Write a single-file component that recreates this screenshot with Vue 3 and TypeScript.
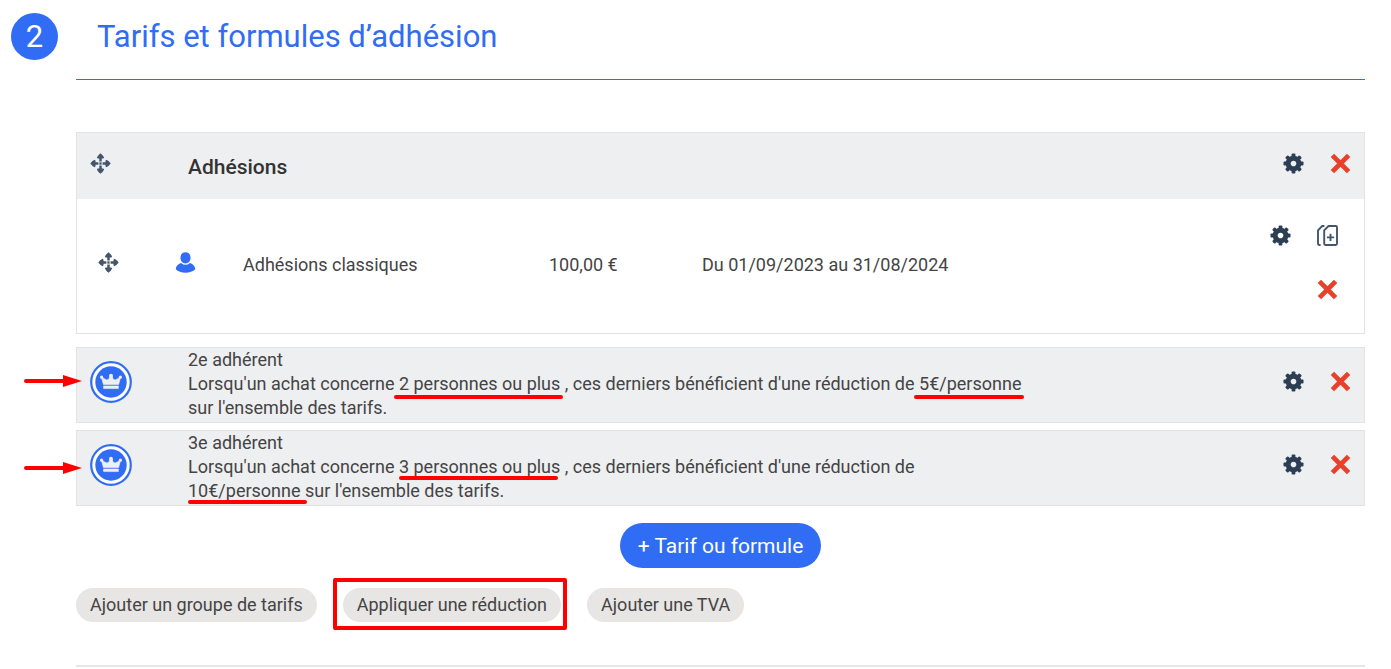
<script setup lang="ts">
interface Reduction {
  id: number
  title: string
  threshold: string
  amount: string
}

const reductions: Reduction[] = [
  { id: 2, title: '2e adhérent', threshold: '2 personnes ou plus', amount: '5€/personne' },
  { id: 3, title: '3e adhérent', threshold: '3 personnes ou plus', amount: '10€/personne' },
]
</script>

<template>
  <svg class="sprite" aria-hidden="true">
    <symbol id="i-move" viewBox="0 0 22 22">
      <path d="M11 0.300Q13.500 2 14.800 4.800L14 5.800H12.300V8.800H9.700V5.800H8L7.200 4.800Q8.500 2 11 0.300ZM11 21.700Q8.500 20 7.200 17.200L8 16.200H9.700V13.200H12.300V16.200H14L14.800 17.200Q13.500 20 11 21.700ZM0.300 11Q2 8.500 4.800 7.200L5.800 8V9.700H8.800V12.300H5.800V14L4.800 14.800Q2 13.500 0.300 11ZM21.700 11Q20 13.500 17.200 14.800L16.200 14V12.300H13.200V9.700H16.200V8L17.200 7.200Q20 8.500 21.700 11Z" fill="#44566c" />
      <rect x="9.800" y="9.800" width="2.400" height="2.400" fill="#44566c" />
    </symbol>
    <symbol id="i-gear" viewBox="-11 -11 22 22">
      <g fill="#2b3e54">
        <rect v-for="n in 8" :key="n" x="-2" y="-10.500" width="4" height="5" rx="1" :transform="`rotate(${n * 45})`" />
      </g>
      <circle r="5.600" fill="none" stroke="#2b3e54" stroke-width="5.200" />
    </symbol>
    <symbol id="i-cross" viewBox="0 0 21 21">
      <path d="M2.400 2.400 18.600 18.600M18.600 2.400 2.400 18.600" stroke="#e8402a" stroke-width="4.800" />
    </symbol>
    <symbol id="i-copy" viewBox="0 0 21 21">
      <g fill="none" stroke="#44566c" stroke-width="1.900">
        <path d="M11.500 1H18.800Q20 1 20 2.200V18.800Q20 20 18.800 20H8.400Q7.200 20 7.200 18.800V5.400Z" />
        <path d="M7.400 1H5.200L1 5.400V18.400Q1 20 3.600 20" />
        <path d="M13.500 8.800V16M9.900 12.400H17.100" />
      </g>
    </symbol>
    <symbol id="i-user" viewBox="0 0 21 22">
      <path d="M10.500 0.300C14 0.300 15.800 2.800 15.800 6S13.600 12 10.500 12 5.200 9.200 5.200 6 7 0.300 10.500 0.300ZM5.800 11.400Q10.500 15.400 15.200 11.400C18.500 12.300 20.700 15 20.700 18.200 18.500 20.600 14.500 21.700 10.500 21.700S2.500 20.600 0.300 18.200C0.300 15 2.500 12.300 5.800 11.400Z" fill="#316cf4" />
    </symbol>
    <symbol id="i-crown" viewBox="0 0 42 42">
      <circle cx="21" cy="21" r="19.800" fill="#fff" stroke="#316cf4" stroke-width="2.200" />
      <circle cx="21" cy="21" r="15.700" fill="#316cf4" />
      <path d="M13.400 23.600 11.400 16.300 16.600 18.900 18.800 18.300 20 14.500H22L23.200 18.300 25.400 18.900 30.600 16.300 28.600 23.600ZM13.600 25H28.400V27.600H13.600Z" fill="#eeeff1" stroke="#eeeff1" stroke-width="0.600" stroke-linejoin="round" />
      <g fill="#eeeff1"><circle cx="11.600" cy="16.200" r="1.600" /><circle cx="21" cy="14.700" r="1.900" /><circle cx="30.400" cy="16.200" r="1.600" /></g>
    </symbol>
  </svg>

  <main class="page">
    <header class="step">
      <span class="step-number">2</span>
      <h1>Tarifs et formules d’adhésion</h1>
    </header>

    <section class="content">
      <div class="group">
        <div class="group-head">
          <button class="icon" type="button" aria-label="Déplacer le groupe"><svg><use href="#i-move" /></svg></button>
          <h2>Adhésions</h2>
          <div class="actions">
            <button class="icon" type="button" aria-label="Paramètres"><svg><use href="#i-gear" /></svg></button>
            <button class="icon" type="button" aria-label="Supprimer"><svg><use href="#i-cross" /></svg></button>
          </div>
        </div>
        <div class="rate">
          <button class="icon" type="button" aria-label="Déplacer le tarif"><svg><use href="#i-move" /></svg></button>
          <span class="icon"><svg><use href="#i-user" /></svg></span>
          <span class="cell">Adhésions classiques</span>
          <span class="cell">100,00 €</span>
          <span class="cell">Du 01/09/2023 au 31/08/2024</span>
          <div class="actions stacked">
            <button class="icon" type="button" aria-label="Paramètres"><svg><use href="#i-gear" /></svg></button>
            <button class="icon" type="button" aria-label="Dupliquer"><svg><use href="#i-copy" /></svg></button>
            <button class="icon" type="button" aria-label="Supprimer"><svg><use href="#i-cross" /></svg></button>
          </div>
        </div>
      </div>

      <article v-for="r in reductions" :key="r.id" class="reduction" :class="'reduction-' + r.id">
        <svg class="arrow" viewBox="0 0 60 14" aria-hidden="true">
          <path d="M3 7H42" stroke="#fe0000" stroke-width="4" stroke-linecap="round" />
          <path d="M40 1 59 7 40 13Z" fill="#fe0000" />
        </svg>
        <svg class="crown"><use href="#i-crown" /></svg>
        <div class="description">
          {{ r.title }}<br />
          Lorsqu'un achat concerne <span class="marked people">{{ r.threshold }}</span> , ces derniers bénéficient d'une réduction de
          <span class="marked amount">{{ r.amount }}</span> sur l'ensemble des tarifs.
        </div>
        <div class="actions">
          <button class="icon" type="button" aria-label="Paramètres"><svg><use href="#i-gear" /></svg></button>
          <button class="icon" type="button" aria-label="Supprimer"><svg><use href="#i-cross" /></svg></button>
        </div>
      </article>

      <button class="primary" type="button">+ Tarif ou formule</button>

      <div class="secondary">
        <button class="pill" type="button">Ajouter un groupe de tarifs</button>
        <span class="framed"><button class="pill" type="button">Appliquer une réduction</button></span>
        <button class="pill" type="button">Ajouter une TVA</button>
      </div>
      <hr />
    </section>
  </main>
</template>

<style>
body {
  margin: 0;
  background: #fff;
}
</style>

<style scoped>
.sprite {
  position: absolute;
  width: 0;
  height: 0;
}
.page {
  box-sizing: border-box;
  padding: 12px 26px 2px 11px;
  font: 18px/24px Roboto, "Liberation Sans", sans-serif;
  color: #444;
}
button {
  border: 0;
  font: inherit;
  color: inherit;
  cursor: pointer;
}
.step {
  display: flex;
  align-items: flex-start;
}
.step-number {
  width: 47px;
  height: 47px;
  margin: 1px 18px 0 0;
  border-radius: 50%;
  background: #316cf4;
  color: #fff;
  font-size: 31px;
  line-height: 47px;
  text-align: center;
}
h1 {
  flex: 1;
  margin: 0;
  padding: 0 0 17px 21px;
  border-bottom: 1px solid #316cf4;
  color: #316cf4;
  font-size: 31px;
  line-height: 50px;
  font-weight: 400;
}
.content {
  margin: 52px 0 0 65px;
}
.group {
  border: 1px solid #e3e3e3;
}
.group-head {
  display: grid;
  grid-template-columns: 98px 1fr auto;
  padding: 20px 13px;
  background: #eeeff1;
}
h2 {
  margin: 2px 0 0;
  color: #333;
  font-size: 21px;
  line-height: 24px;
  font-weight: 500;
}
.icon {
  display: block;
  width: 21px;
  height: 21px;
  padding: 0;
  background: none;
}
.icon svg {
  display: block;
  width: 100%;
  height: 100%;
}
.actions {
  display: flex;
  justify-content: flex-end;
  gap: 33px 26px;
}
.stacked {
  flex-wrap: wrap;
}
.rate {
  display: grid;
  grid-template-columns: 77px 68px 306fr 153fr 568fr 68px;
  align-items: center;
  padding: 26px 26px 33px 21px;
}
.cell {
  padding-top: 4px;
}
.reduction {
  position: relative;
  display: flex;
  align-items: center;
  margin-top: 7px;
  padding: 0 13px 2px;
  border: 1px solid #e3e3e3;
  background: #eeeff1;
}
.reduction-2 {
  margin-top: 13px;
}
.crown {
  flex: none;
  width: 42px;
  height: 42px;
  margin: 0 56px 5px 0;
}
.description {
  width: calc(100% * 2 / 3);
}
.reduction .actions {
  margin: 0 0 5px auto;
}
.arrow {
  position: absolute;
  top: 26px;
  left: -54px;
  width: 60px;
  height: 14px;
}
.reduction-3 .arrow {
  top: 30px;
}
.marked {
  position: relative;
}
.marked::after {
  content: "";
  position: absolute;
  right: -3px;
  bottom: -5px;
  left: -5px;
  height: 4px;
  border-radius: 2px;
  background: #fe0000;
}
.reduction-3 .people::after {
  right: 2px;
  bottom: -3px;
  left: 0;
}
.reduction-3 .amount::after {
  right: -6px;
  bottom: -3px;
  left: 0;
}
.primary {
  display: block;
  height: 45px;
  margin: 17px auto 20px;
  padding: 0 18px;
  border-radius: 23px;
  background: #316cf4;
  color: #fff;
  font-size: 21px;
}
.secondary {
  display: flex;
  gap: 26px;
}
.pill {
  height: 34px;
  padding: 0 14px;
  border-radius: 17px;
  background: #e7e6e4;
}
.framed {
  position: relative;
}
.framed::after {
  content: "";
  position: absolute;
  inset: -10px -6px -8px -10px;
  border: 4px solid #fe0000;
  border-radius: 2px;
  pointer-events: none;
}
hr {
  margin: 43px 0 0;
  border: 0;
  border-top: 2px solid #e6e6e6;
}
</style>
